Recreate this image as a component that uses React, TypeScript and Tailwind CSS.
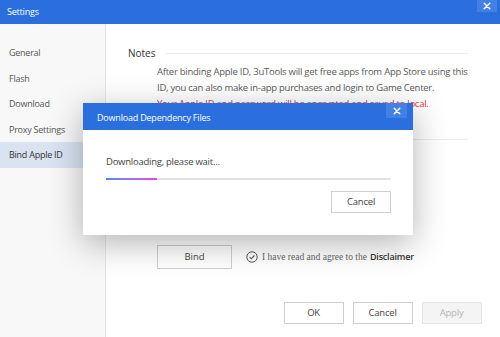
const font = { fontFamily: '"Open Sans", "Noto Sans", sans-serif' };

function CloseX({ size = 9 }: { size?: number }) {
  return (
    <svg width={size} height={size} viewBox="0 0 10 10" fill="none">
      <path d="M1.5 1.5l7 7M8.5 1.5l-7 7" stroke="white" strokeWidth="1.8" strokeLinecap="round" />
    </svg>
  );
}

function Btn({ label, disabled = false }: { label: string; disabled?: boolean }) {
  return (
    <div
      className={`w-[60px] h-[22px] flex items-center justify-center border text-[9.5px] tracking-[-0.2px] ${
        disabled ? "border-[#e6e6e6] bg-[#f4f4f4] text-[#b4b4b4]" : "border-[#cfcfcf] bg-white text-[#444]"
      }`}
    >
      {label}
    </div>
  );
}

const menu = ["General", "Flash", "Download", "Proxy Settings", "Bind Apple ID"];

export default function App() {
  return (
    <div className="relative w-[500px] h-[337px] overflow-hidden bg-white" style={font}>
      {/* window title */}
      <div className="h-[24px] bg-[#2a6fdd] flex items-start justify-between">
        <div className="pl-[7px] pt-[5px] text-[9px] text-white tracking-[-0.2px]">Settings</div>
        <div className="mr-[3px] w-[20px] h-[12px] bg-[#4281e3] flex items-center justify-center">
          <CloseX size={8} />
        </div>
      </div>

      <div className="flex h-[313px]">
        {/* sidebar */}
        <div className="w-[106px] shrink-0 bg-[#f8f8f8] border-r border-[#e6e6e6] pt-[16px] text-[9px] text-[#555] tracking-[-0.25px]">
          {menu.map((m) => (
            <div
              key={m}
              className={`h-[25.5px] flex items-center pl-[9px] ${
                m === "Bind Apple ID" ? "bg-[#d9e3f2] text-[#333]" : ""
              }`}
            >
              {m}
            </div>
          ))}
        </div>

        {/* content */}
        <div className="flex-1 flex flex-col pl-[22px] pr-[33px] pt-[22px]">
          <div className="flex items-center gap-[9px]">
            <span className="text-[10px] text-[#333]">Notes</span>
            <div className="flex-1 h-px bg-[#ececec]" />
          </div>
          <div className="pl-[29px] mt-[3px] text-[9.5px] leading-[16px] text-[#5a5a5a] tracking-[-0.25px] whitespace-nowrap">
            <div>After binding Apple ID, 3uTools will get free apps from App Store using this</div>
            <div>ID, you can also make in-app purchases and login to Game Center.</div>
            <div className="text-[#d93a3a]">Your Apple ID and password will be encrypted and saved to local.</div>
          </div>

          <div className="mt-[27px] flex items-center">
            <div className="flex-1 h-px bg-[#ececec]" />
          </div>

          <div className="mt-[105px] pl-[29px] flex items-center">
            <div className="w-[75px] h-[24px] border border-[#cfcfcf] flex items-center justify-center text-[9.5px] text-[#444]">
              Bind
            </div>
            <svg className="ml-[14px]" width="12" height="12" viewBox="0 0 12 12" fill="none">
              <circle cx="6" cy="6" r="5.2" stroke="#555" strokeWidth="1" />
              <path d="M3.6 6.2l1.7 1.6 3.1-3.3" stroke="#555" strokeWidth="1.1" />
            </svg>
            <span className="ml-[4px] text-[9.5px] text-[#666]" style={{ fontFamily: '"Liberation Serif", serif' }}>
              I have read and agree to the
            </span>
            <span className="ml-[3px] text-[9px] font-semibold text-[#333] tracking-[-0.2px]">Disclaimer</span>
          </div>

          <div className="mt-[33px] flex justify-end gap-[9px] mr-[-14px]">
            <Btn label="OK" />
            <Btn label="Cancel" />
            <Btn label="Apply" disabled />
          </div>
        </div>
      </div>

      {/* modal */}
      <div className="absolute left-[83px] top-[103px] w-[330px] h-[132px] bg-white shadow-[0_8px_32px_rgba(0,0,0,0.3)] flex flex-col">
        <div className="h-[27px] bg-[#2a6fdd] flex items-start justify-between">
          <div className="pl-[14px] pt-[8px] text-[9px] text-white tracking-[-0.2px]">Download Dependency Files</div>
          <div className="mr-[6px] w-[21px] h-[15px] bg-[#4281e3] flex items-center justify-center">
            <CloseX size={8} />
          </div>
        </div>
        <div className="pl-[23px] pr-[22px] pt-[25px] flex flex-col">
          <div className="text-[9.5px] text-[#444] tracking-[-0.25px]">Downloading, please wait...</div>
          <div className="mt-[9px] h-[2px] w-full bg-[#e2e2e2] relative">
            <div className="h-full w-[51px] bg-gradient-to-r from-[#3b8fe6] to-[#e43ee0]" />
          </div>
          <div className="mt-[11px] flex justify-end">
            <div className="w-[60px] h-[22px] border border-[#cfcfcf] flex items-center justify-center text-[9.5px] text-[#444] tracking-[-0.2px]">
              Cancel
            </div>
          </div>
        </div>
      </div>
    </div>
  );
}
